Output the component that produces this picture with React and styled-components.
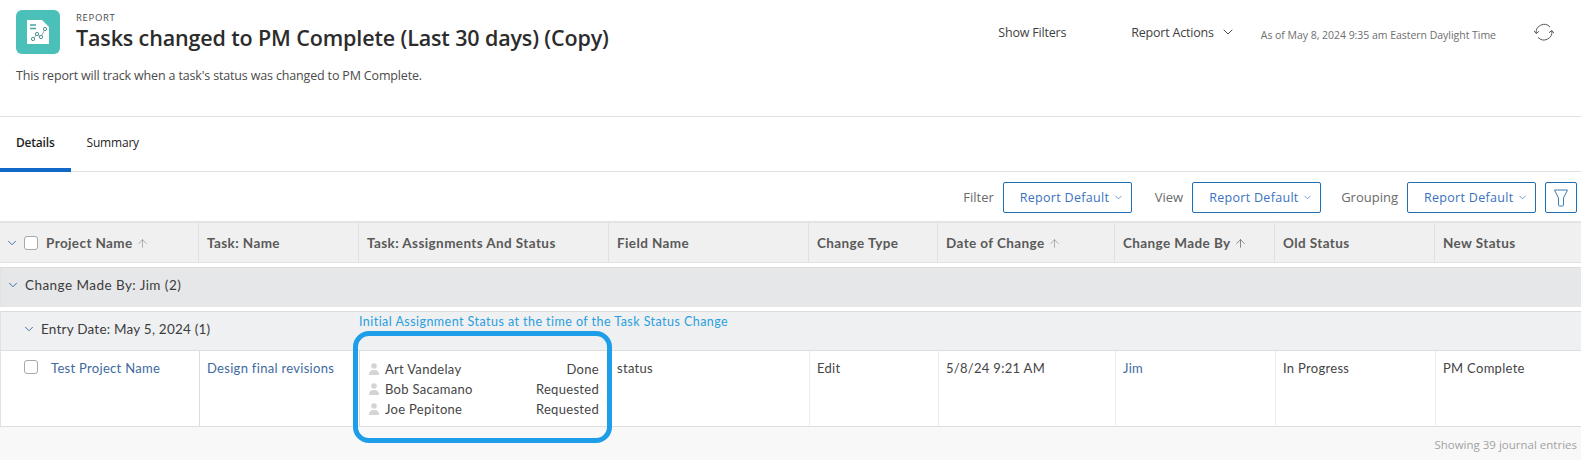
import React from 'react';
import styled, { createGlobalStyle } from 'styled-components';
import { ChevronDown, ArrowUp } from 'lucide-react';

const GlobalStyle = createGlobalStyle`
  html, body { margin: 0; padding: 0; background: #fff; }
  body { font-family: "Open Sans", "Liberation Sans", sans-serif; color: #2c2c2c; }
`;

const COLUMNS = '198px 160px 250px 200px 129px 177px 160px 160px 1fr';

const Page = styled.div`
  position: relative;
  width: 1581px;
  height: 460px;
  overflow: hidden;
  display: flex;
  flex-direction: column;
`;

const Header = styled.header`
  height: 117px;
  box-sizing: border-box;
  border-bottom: 1px solid #e1e1e1;
  padding: 10px 27px 0 16px;
`;

const HeaderTop = styled.div`
  display: flex;
  align-items: flex-start;
`;

const IconTile = styled.div`
  width: 44px;
  height: 44px;
  border-radius: 6px;
  background: #4bc0b8;
  display: flex;
  align-items: center;
  justify-content: center;
  flex: none;
`;

const TitleBlock = styled.div`
  margin-left: 16px;
  flex: 1;
`;

const Eyebrow = styled.div`
  font-size: 9.5px;
  line-height: 16px;
  letter-spacing: 0.7px;
  color: #4b4b4b;
`;

const Title = styled.h1`
  margin: 0;
  font-size: 21.5px;
  line-height: 24px;
  font-weight: 600;
  letter-spacing: -0.14px;
  color: #2c2c2c;
`;

const HeaderActions = styled.div`
  display: flex;
  align-items: center;
  height: 44px;
`;

const HeaderLink = styled.span`
  display: flex;
  align-items: center;
  gap: 6px;
  font-size: 12.5px;
  letter-spacing: -0.2px;
  color: #3f3f3f;
  margin-right: ${(p) => p.$gap}px;
`;

const Stamp = styled.span`
  font-size: 10.5px;
  letter-spacing: -0.03px;
  color: #6e6e6e;
  padding-top: 6px;
  margin-right: 38px;
`;

const Description = styled.p`
  margin: 13px 0 0;
  font-size: 12.5px;
  line-height: 18px;
  letter-spacing: -0.16px;
  color: #4b4b4b;
`;

const Tabs = styled.nav`
  height: 55px;
  box-sizing: border-box;
  border-bottom: 1px solid #e1e1e1;
  display: flex;
`;

const Tab = styled.div`
  height: 55px;
  box-sizing: border-box;
  padding: 0 16px;
  display: flex;
  align-items: center;
  font-size: 12px;
  letter-spacing: -0.2px;
  font-weight: ${(p) => (p.$active ? 600 : 400)};
  color: #1f1f1f;
  border-bottom: 4px solid ${(p) => (p.$active ? '#1268c8' : 'transparent')};
`;

const Toolbar = styled.div`
  height: 49px;
  box-sizing: border-box;
  padding: 10px 4px 0 0;
  display: flex;
  align-items: flex-start;
  justify-content: flex-end;
`;

const FilterLabel = styled.span`
  font-size: 13px;
  line-height: 31px;
  color: #6a6a6a;
  margin-right: 9px;
`;

const SelectButton = styled.div`
  width: 129px;
  height: 31px;
  box-sizing: border-box;
  border: 1px solid #1f6fb0;
  border-radius: 2px;
  display: flex;
  align-items: center;
  justify-content: space-between;
  padding: 0 7px 0 16px;
  margin-right: ${(p) => p.$gap}px;
  font-size: 12.5px;
  letter-spacing: 0.3px;
  color: #3a72c0;
`;

const FunnelButton = styled.div`
  width: 32px;
  height: 31px;
  box-sizing: border-box;
  border: 1px solid #1f6fb0;
  border-radius: 2px;
  display: flex;
  align-items: center;
  justify-content: center;
`;

const Row = styled.div`
  display: grid;
  grid-template-columns: ${COLUMNS};
`;

const HeadRow = styled(Row)`
  height: 42px;
  box-sizing: border-box;
  border-top: 2px solid #e4e4e4;
  background: #f0f0f0;
  margin-bottom: 4px;
  border-bottom: 1px solid #e2e2e2;
`;

const HeadCell = styled.div`
  display: flex;
  align-items: center;
  padding: 1px 0 0 ${(p) => p.$pad || 8}px;
  border-left: ${(p) => (p.$first ? 'none' : '1px solid #e0e0e0')};
  font-family: "Lato", "Open Sans", sans-serif;
  font-size: 13.5px;
  font-weight: 700;
  letter-spacing: 0.4px;
  color: #595959;
  white-space: nowrap;
`;

const SortArrow = styled(ArrowUp)`
  margin-left: 3px;
  color: ${(p) => (p.$dark ? '#333' : '#777')};
`;

const HeadChevron = styled(ChevronDown)`
  color: #2a5f9e;
  margin-right: 5px;
  flex: none;
`;

const Check = styled.span`
  display: inline-block;
  width: 14px;
  height: 14px;
  box-sizing: border-box;
  border: 1px solid #a8a8a8;
  border-radius: 3px;
  background: #fff;
  flex: none;
  margin-right: ${(p) => p.$gap}px;
`;

const GroupRow = styled.div`
  height: ${(p) => (p.$sub ? 39 : 40)}px;
  box-sizing: border-box;
  padding: 0 0 ${(p) => (p.$sub ? 5 : 6)}px ${(p) => (p.$sub ? 21 : 5)}px;
  margin-bottom: ${(p) => (p.$sub ? 0 : 4)}px;
  background: ${(p) => (p.$sub ? '#eff0f1' : '#e6e7e9')};
  border-top: 1px solid #dcdcdc;
  border-left: 1px solid #e2e2e2;
  display: flex;
  align-items: center;
  font-family: "Lato", "Open Sans", sans-serif;
  font-size: 13.5px;
  letter-spacing: ${(p) => (p.$sub ? 0.22 : 0.45)}px;
  color: #3c3c3c;
`;

const DataRow = styled(Row)`
  height: 77px;
  box-sizing: border-box;
  background: #fff;
  border-top: 1px solid #dedede;
  border-bottom: 1px solid #dedede;
  border-left: 1px solid #e2e2e2;
`;

const Cell = styled.div`
  padding: 9px 0 0 ${(p) => p.$pad || 7}px;
  border-left: 1px solid ${(p) => (p.$strong ? '#dcdcdc' : '#ececec')};
  font-family: "Lato", "Open Sans", sans-serif;
  font-size: 13px;
  line-height: 16px;
  letter-spacing: 0.3px;
  color: #454545;
  white-space: nowrap;
`;

const ProjectCell = styled(Cell)`
  display: flex;
  align-items: flex-start;
  padding-left: 23px;
  border-left: none;
`;

const Link = styled.span`
  color: #3d6a9e;
`;

const AssignCell = styled(Cell)`
  padding: 10px 10px 0 9px;
  display: flex;
  flex-direction: column;
  gap: 3.5px;
`;

const Assignee = styled.div`
  display: flex;
  align-items: center;
  height: 16.5px;
`;

const AssigneeName = styled.span`
  margin-left: 6px;
  flex: 1;
`;

const Footer = styled.div`
  flex: 1;
  background: #f8f8f8;
  text-align: right;
  padding: 10px 4px 0 0;
  font-size: 11.5px;
  color: #a2a2a2;
`;

const Annotation = styled.div`
  position: absolute;
  left: 359px;
  top: 313px;
  font-family: "Lato", "Open Sans", sans-serif;
  font-size: 12.5px;
  line-height: 18px;
  letter-spacing: 0.45px;
  color: #2a9fe0;
`;

const Ring = styled.div`
  position: absolute;
  left: 353px;
  top: 331px;
  width: 259px;
  height: 112px;
  box-sizing: border-box;
  border: 5px solid #1e9ee8;
  border-radius: 16px;
`;

const ReportIcon = () => (
  <svg width="22" height="24" viewBox="0 0 22 24">
    <path d="M0 0h15l7 7v17H0z" fill="#fff" />
    <path d="M3 5h6M3 8.500h6" stroke="#3fa8a2" strokeWidth="1.6" />
    <path d="M6 19l4-5 4 3 4-8" fill="none" stroke="#7fb5b2" strokeWidth="1" />
    <circle cx="6" cy="19" r="1.6" fill="#fff" stroke="#4b8f8c" />
    <circle cx="10" cy="14" r="1.6" fill="#fff" stroke="#4b8f8c" />
    <circle cx="14" cy="17" r="1.6" fill="#fff" stroke="#4b8f8c" />
    <circle cx="18" cy="9" r="1.6" fill="#fff" stroke="#4b8f8c" />
  </svg>
);

const RefreshIcon = () => (
  <svg width="20" height="20" viewBox="0 0 20 20" fill="none" stroke="#5a5a5a" strokeWidth="1">
    <path d="M16 5A8 8 0 0 0 2.200 11.500" />
    <path d="M0.200 9L2.200 11.500L5 9.300" />
    <path d="M4 15.300A8 8 0 0 0 17.800 8.500" />
    <path d="M15 10.700L17.800 8.500L19.800 11" />
  </svg>
);

const FunnelIcon = () => (
  <svg width="16" height="20" viewBox="0 0 16 20" fill="none" stroke="#3f7cb0" strokeWidth="1">
    <path d="M1.500 2h13L10.500 10v7a1 1 0 0 1-1 1h-3a1 1 0 0 1-1-1v-7z" />
  </svg>
);

const PersonIcon = () => (
  <svg width="10" height="12" viewBox="0 0 10 12" fill="#d4d4d4">
    <circle cx="5" cy="3" r="2.8" />
    <path d="M0 12c0-3.500 1.500-5 5-5s5 1.500 5 5z" />
  </svg>
);

const columns = [
  { label: 'Task: Name' },
  { label: 'Task: Assignments And Status' },
  { label: 'Field Name' },
  { label: 'Change Type' },
  { label: 'Date of Change', arrow: 'light' },
  { label: 'Change Made By', arrow: 'dark' },
  { label: 'Old Status' },
  { label: 'New Status' },
];

const assignees = [
  { name: 'Art Vandelay', status: 'Done' },
  { name: 'Bob Sacamano', status: 'Requested' },
  { name: 'Joe Pepitone', status: 'Requested' },
];

const selects = [
  { label: 'Filter', gap: 23 },
  { label: 'View', gap: 20 },
  { label: 'Grouping', gap: 9 },
];

export default function App() {
  return (
    <Page>
      <GlobalStyle />
      <Header>
        <HeaderTop>
          <IconTile>
            <ReportIcon />
          </IconTile>
          <TitleBlock>
            <Eyebrow>REPORT</Eyebrow>
            <Title>Tasks changed to PM Complete (Last 30 days) (Copy)</Title>
          </TitleBlock>
          <HeaderActions>
            <HeaderLink $gap={65}>Show Filters</HeaderLink>
            <HeaderLink $gap={25}>
              Report Actions
              <ChevronDown size={16} strokeWidth={1.4} />
            </HeaderLink>
            <Stamp>As of May 8, 2024 9:35 am Eastern Daylight Time</Stamp>
            <RefreshIcon />
          </HeaderActions>
        </HeaderTop>
        <Description>This report will track when a task's status was changed to PM Complete.</Description>
      </Header>

      <Tabs>
        <Tab $active>Details</Tab>
        <Tab>Summary</Tab>
      </Tabs>

      <Toolbar>
        {selects.map((s) => (
          <React.Fragment key={s.label}>
            <FilterLabel>{s.label}</FilterLabel>
            <SelectButton $gap={s.gap}>
              Report Default
              <ChevronDown size={11} strokeWidth={1.5} />
            </SelectButton>
          </React.Fragment>
        ))}
        <FunnelButton>
          <FunnelIcon />
        </FunnelButton>
      </Toolbar>

      <HeadRow>
        <HeadCell $first $pad={5}>
          <HeadChevron size={14} strokeWidth={1.5} />
          <Check $gap={8} />
          Project Name
          <SortArrow size={13} strokeWidth={1} />
        </HeadCell>
        {columns.map((c) => (
          <HeadCell key={c.label}>
            {c.label}
            {c.arrow && <SortArrow size={13} strokeWidth={1} $dark={c.arrow === 'dark'} />}
          </HeadCell>
        ))}
      </HeadRow>

      <GroupRow>
        <HeadChevron size={14} strokeWidth={1.5} />
        Change Made By: Jim (2)
      </GroupRow>
      <GroupRow $sub>
        <HeadChevron size={14} strokeWidth={1.5} />
        Entry Date: May 5, 2024 (1)
      </GroupRow>

      <DataRow>
        <ProjectCell>
          <Check $gap={13} />
          <Link>Test Project Name</Link>
        </ProjectCell>
        <Cell $strong>
          <Link>Design final revisions</Link>
        </Cell>
        <AssignCell $strong>
          {assignees.map((a) => (
            <Assignee key={a.name}>
              <PersonIcon />
              <AssigneeName>{a.name}</AssigneeName>
              {a.status}
            </Assignee>
          ))}
        </AssignCell>
        <Cell>status</Cell>
        <Cell>Edit</Cell>
        <Cell>5/8/24 9:21 AM</Cell>
        <Cell>
          <Link>Jim</Link>
        </Cell>
        <Cell>In Progress</Cell>
        <Cell>PM Complete</Cell>
      </DataRow>

      <Footer>Showing 39 journal entries</Footer>

      <Annotation>Initial Assignment Status at the time of the Task Status Change</Annotation>
      <Ring />
    </Page>
  );
}
